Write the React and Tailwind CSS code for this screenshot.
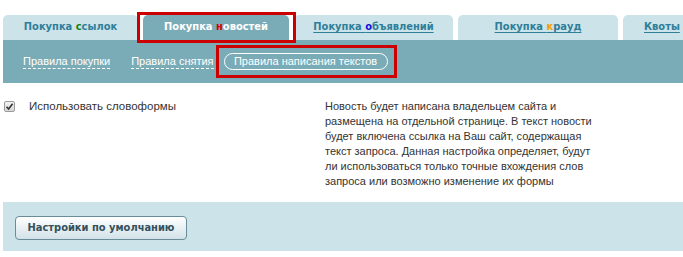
import React from "react";

const bold = { fontFamily: "'DejaVu Sans Condensed', 'Liberation Sans', sans-serif" };
const reg = { fontFamily: "'Liberation Sans', Arial, sans-serif" };

function Tab({ w, active, underline, pre, hl, hlColor, post }) {
  return (
    <div
      className={`h-[25px] rounded-t-[5px] flex items-center justify-center shrink-0 text-[11px] font-bold ${
        active ? "bg-[#7aacb7] text-white" : "bg-[#cce3ea] text-[#2f7f99]"
      }`}
      style={{ width: w, minWidth: w, ...bold }}
    >
      <span className={underline ? "underline underline-offset-2" : ""}>
        {pre}
        <span className={hlColor}>{hl}</span>
        {post}
      </span>
    </div>
  );
}

const lines = [
  "Новость будет написана владельцем сайта и",
  "размещена на отдельной странице. В текст новости",
  "будет включена ссылка на Ваш сайт, содержащая",
  "текст запроса. Данная настройка определяет, будут",
  "ли использоваться только точные вхождения слов",
  "запроса или возможно изменение их формы",
];

export default function App() {
  return (
    <div className="relative w-[683px] h-[257px] bg-white overflow-hidden text-[#333]" style={reg}>
      <div className="flex gap-[5px] pt-[15px] pl-[3px]">
        <Tab w={135} pre="Покупка " hl="с" hlColor="text-[#12820f]" post="сылок" />
        <Tab w={146} active pre="Покупка " hl="н" hlColor="text-[#e00000]" post="овостей" />
        <Tab w={159} underline pre="Покупка " hl="о" hlColor="text-[#1010e0]" post="бъявлений" />
        <Tab w={160} underline pre="Покупка " hl="к" hlColor="text-[#f2a000]" post="рауд" />
        <div className="h-[25px] w-[120px] min-w-[120px] shrink-0 rounded-t-[5px] bg-[#cce3ea] text-[#2f7f99] text-[11px] font-bold flex items-center pl-[21px] whitespace-nowrap" style={bold}>
          <span className="underline underline-offset-2">Квоты</span>
        </div>
      </div>
      <div className="ml-[3px] h-[43px] bg-[#7aacb7] flex items-center pl-[20px] text-[11px] text-white">
        <span className="border-b border-dashed border-white leading-[14px]">Правила покупки</span>
        <span className="ml-[21px] border-b border-dashed border-white leading-[14px]">Правила снятия</span>
        <span className="ml-[10px] h-[17px] w-[164px] rounded-full border border-white flex items-center justify-center leading-none">
          Правила написания текстов
        </span>
      </div>
      <div className="flex pt-[12px] h-[119px]">
        <div className="w-[325px] flex items-start pl-[4px] pt-[3px]">
          <div className="w-[11px] h-[11px] mt-[3px] rounded-[2px] border border-[#9a9a9a] bg-gradient-to-b from-[#f4f4f4] to-[#d6d6d6] flex items-center justify-center">
            <svg width="9" height="9" viewBox="0 0 9 9">
              <path d="M1.5 4.8 L3.6 7 L7.6 1.8" stroke="#333" strokeWidth="1.6" fill="none" />
            </svg>
          </div>
          <span className="ml-[14px] text-[11.5px] text-[#333]">Использовать словоформы</span>
        </div>
        <p className="text-[11px] leading-[15px] text-[#333] pt-[4px] whitespace-nowrap">
          {lines.map((l, i) => (
            <span key={i} className="block">{l}</span>
          ))}
        </p>
      </div>
      <div className="ml-[3px] h-[49px] bg-[#cce3ea] flex items-start pt-[14px] pl-[12px]">
        <button className="w-[172px] h-[24px] rounded-[4px] border border-[#6a8c99] bg-gradient-to-b from-white to-[#d2e2e8] text-[11px] font-bold text-[#34505c]" style={bold}>
          Настройки по умолчанию
        </button>
      </div>
      <div className="absolute left-[137px] top-[12px] w-[159px] h-[31px] border-[3px] border-[#cc0000]" />
      <div className="absolute left-[216px] top-[45px] w-[181px] h-[33px] border-[3px] border-[#cc0000]" />
    </div>
  );
}
